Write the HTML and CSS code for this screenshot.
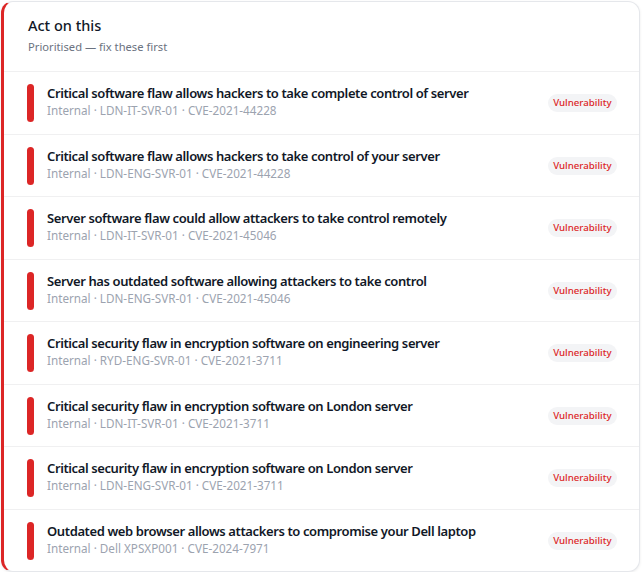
FILE: index.html
```html
<!DOCTYPE html>
<html lang="en">
<head>
<meta charset="utf-8">
<title>Act on this</title>
<link rel="stylesheet" href="styles.css">
</head>
<body>
<section class="card">
  <header class="card-head">
    <h2 class="card-title">Act on this</h2>
    <p class="card-sub">Prioritised — fix these first</p>
  </header>
  <ul class="list">
    <li class="row"><span class="mark"></span><div class="txt"><div class="ttl">Critical software flaw allows hackers to take complete control of server</div><div class="meta">Internal · LDN-IT-SVR-01 · CVE-2021-44228</div></div><span class="badge">Vulnerability</span></li>
    <li class="row"><span class="mark"></span><div class="txt"><div class="ttl">Critical software flaw allows hackers to take control of your server</div><div class="meta">Internal · LDN-ENG-SVR-01 · CVE-2021-44228</div></div><span class="badge">Vulnerability</span></li>
    <li class="row"><span class="mark"></span><div class="txt"><div class="ttl">Server software flaw could allow attackers to take control remotely</div><div class="meta">Internal · LDN-IT-SVR-01 · CVE-2021-45046</div></div><span class="badge">Vulnerability</span></li>
    <li class="row"><span class="mark"></span><div class="txt"><div class="ttl">Server has outdated software allowing attackers to take control</div><div class="meta">Internal · LDN-ENG-SVR-01 · CVE-2021-45046</div></div><span class="badge">Vulnerability</span></li>
    <li class="row"><span class="mark"></span><div class="txt"><div class="ttl">Critical security flaw in encryption software on engineering server</div><div class="meta">Internal · RYD-ENG-SVR-01 · CVE-2021-3711</div></div><span class="badge">Vulnerability</span></li>
    <li class="row"><span class="mark"></span><div class="txt"><div class="ttl">Critical security flaw in encryption software on London server</div><div class="meta">Internal · LDN-IT-SVR-01 · CVE-2021-3711</div></div><span class="badge">Vulnerability</span></li>
    <li class="row"><span class="mark"></span><div class="txt"><div class="ttl">Critical security flaw in encryption software on London server</div><div class="meta">Internal · LDN-ENG-SVR-01 · CVE-2021-3711</div></div><span class="badge">Vulnerability</span></li>
    <li class="row"><span class="mark"></span><div class="txt"><div class="ttl">Outdated web browser allows attackers to compromise your Dell laptop</div><div class="meta">Internal · Dell XPSXP001 · CVE-2024-7971</div></div><span class="badge">Vulnerability</span></li>
  </ul>
</section>
</body>
</html>
```
FILE: styles.css
```css
* { box-sizing: border-box; }
html, body { margin: 0; padding: 0; background: #ffffff; }
body {
  font-family: "Noto Sans", "Open Sans", sans-serif;
  color: #111827;
  padding: 1px 2px 0 1px;
}
.card {
  background: #fff;
  border: 1px solid #e5e7eb;
  border-left: 3px solid #dc2626;
  border-radius: 12px;
  box-shadow: 0 1px 3px rgba(0,0,0,0.08);
  overflow: hidden;
}
.card-head {
  padding: 12px 24px 16px 24px;
  border-bottom: 1px solid #f0f0f1;
}
.card-title {
  margin: 0;
  font-size: 14.5px;
  font-weight: 550;
  line-height: 22px;
  color: #111827;
}
.card-sub {
  margin: 3px 0 0;
  font-size: 11.2px;
  line-height: 16px;
  color: #6b7280;
}
.list { list-style: none; margin: 0; padding: 0; }
.row {
  display: flex;
  align-items: center;
  gap: 13px;
  padding: 12px 22px 11.5px 23px;
  border-bottom: 1px solid #f0f0f1;
}
.row:last-child { border-bottom: none; }
.mark {
  flex: none;
  width: 7px;
  height: 38px;
  border-radius: 4px;
  background: #dc2626;
}
.txt { flex: 1; min-width: 0; margin-bottom: 3px; }
.ttl {
  font-size: 13px;
  font-weight: 560;
  letter-spacing: -0.39px;
  line-height: 18px;
  color: #111827;
  white-space: nowrap;
}
.meta {
  font-size: 11.7px;
  line-height: 17px;
  color: #9ca3af;
  white-space: nowrap;
}
.badge {
  flex: none;
  font-size: 9.7px;
  font-weight: 500;
  line-height: 18px;
  padding: 0 5.5px;
  border-radius: 9px;
  background: #f3f4f6;
  color: #dc2626;
}
```
